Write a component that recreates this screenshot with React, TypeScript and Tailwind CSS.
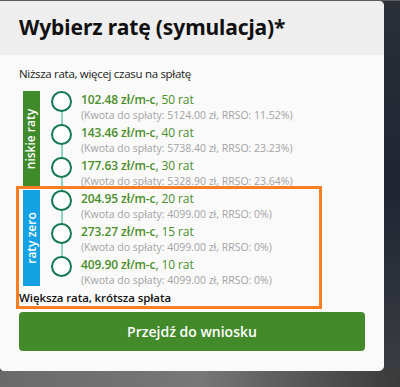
const rows = [
  { group: 0, rate: "102.48", count: 50, total: "5124.00", rrso: "11.52%" },
  { group: 0, rate: "143.46", count: 40, total: "5738.40", rrso: "23.23%" },
  { group: 0, rate: "177.63", count: 30, total: "5328.90", rrso: "23.64%" },
  { group: 1, rate: "204.95", count: 20, total: "4099.00", rrso: "0%" },
  { group: 1, rate: "273.27", count: 15, total: "4099.00", rrso: "0%" },
  { group: 1, rate: "409.90", count: 10, total: "4099.00", rrso: "0%" },
];

const groups = [
  { label: "niskie raty", color: "bg-[#3f8a2a]" },
  { label: "raty zero", color: "bg-[#14a2e4]" },
];

function RateRow({ rate, count, total, rrso }: (typeof rows)[number]) {
  return (
    <div className="relative flex h-[33px] items-start">
      <div className="relative z-10 ml-[11px] mt-[1px] h-[21px] w-[21px] shrink-0 rounded-full border-[2.5px] border-[#13784f] bg-white" />
      <div className="ml-[9px] mt-[2px] flex flex-col">
        <p className="text-[12px] leading-[16px] tracking-[-0.1px] text-[#4b8e2a]">
          <span className="font-semibold">{rate} zł/m-c</span>, {count} rat
        </p>
        <p className="text-[10.5px] leading-[14px] text-[#a3a3a3]">
          (Kwota do spłaty: {total} zł, RRSO: {rrso})
        </p>
      </div>
    </div>
  );
}

export default function App() {
  return (
    <div className="flex h-[387px] w-[400px] flex-col overflow-hidden bg-[#3b3d42] font-['Open_Sans',sans-serif]">
      <div className="h-[1px] shrink-0 bg-[#5a5c60]" />
      <div className="flex h-[370px] shrink-0">
        <div className="relative flex w-[384px] flex-col overflow-hidden rounded-r-[5px] rounded-bl-[4px] bg-[#fafafa]">
          <div className="flex h-[54px] shrink-0 items-center bg-[#eeeeee] px-[19px]">
            <h1 className="font-['Noto_Sans',sans-serif] text-[21px] font-bold tracking-[-0.1px] text-[#111]">
              Wybierz ratę (symulacja)*
            </h1>
          </div>
          <div className="flex flex-col px-[19px] pt-[10px]">
            <p className="text-[11.5px] leading-[18px] tracking-[-0.3px] text-[#1a1a1a]">
              Niższa rata, więcej czasu na spłatę
            </p>
            <div className="relative mt-[7px] flex flex-col">
              <div className="absolute left-[42px] top-[11px] h-[165px] w-[2px] bg-[#8fd4c3]" />
              {groups.map((g, gi) => (
                <div key={g.label} className="flex">
                  <div
                    className={`ml-[4px] mt-[1px] flex h-[96px] w-[17px] shrink-0 items-center justify-center ${g.color}`}
                  >
                    <span className="-rotate-90 whitespace-nowrap text-[12px] font-semibold leading-none text-white">
                      {g.label}
                    </span>
                  </div>
                  <div className="flex flex-col">
                    {rows
                      .filter((r) => r.group === gi)
                      .map((r) => (
                        <RateRow key={r.rate} {...r} />
                      ))}
                  </div>
                </div>
              ))}
            </div>
            <p className="mt-[1px] text-[11.5px] font-semibold leading-[18px] tracking-[-0.1px] text-[#111]">
              Większa rata, krótsza spłata
            </p>
            <button className="mt-[5px] h-[39px] w-[346px] rounded-[4px] bg-[#438a2b] text-[14px] font-semibold text-white">
              Przejdź do wniosku
            </button>
          </div>
          <div className="absolute left-[16px] top-[185px] h-[123px] w-[306px] border-[3px] border-[#fb7d22]" />
        </div>
        <div className="flex-1 bg-gradient-to-b from-[#2a2e36] via-[#1f2533] to-[#3a3c40]" />
      </div>
      <div className="flex-1 bg-gradient-to-r from-[#6a6a6a] via-[#777] to-[#3a3a3a]" />
    </div>
  );
}
